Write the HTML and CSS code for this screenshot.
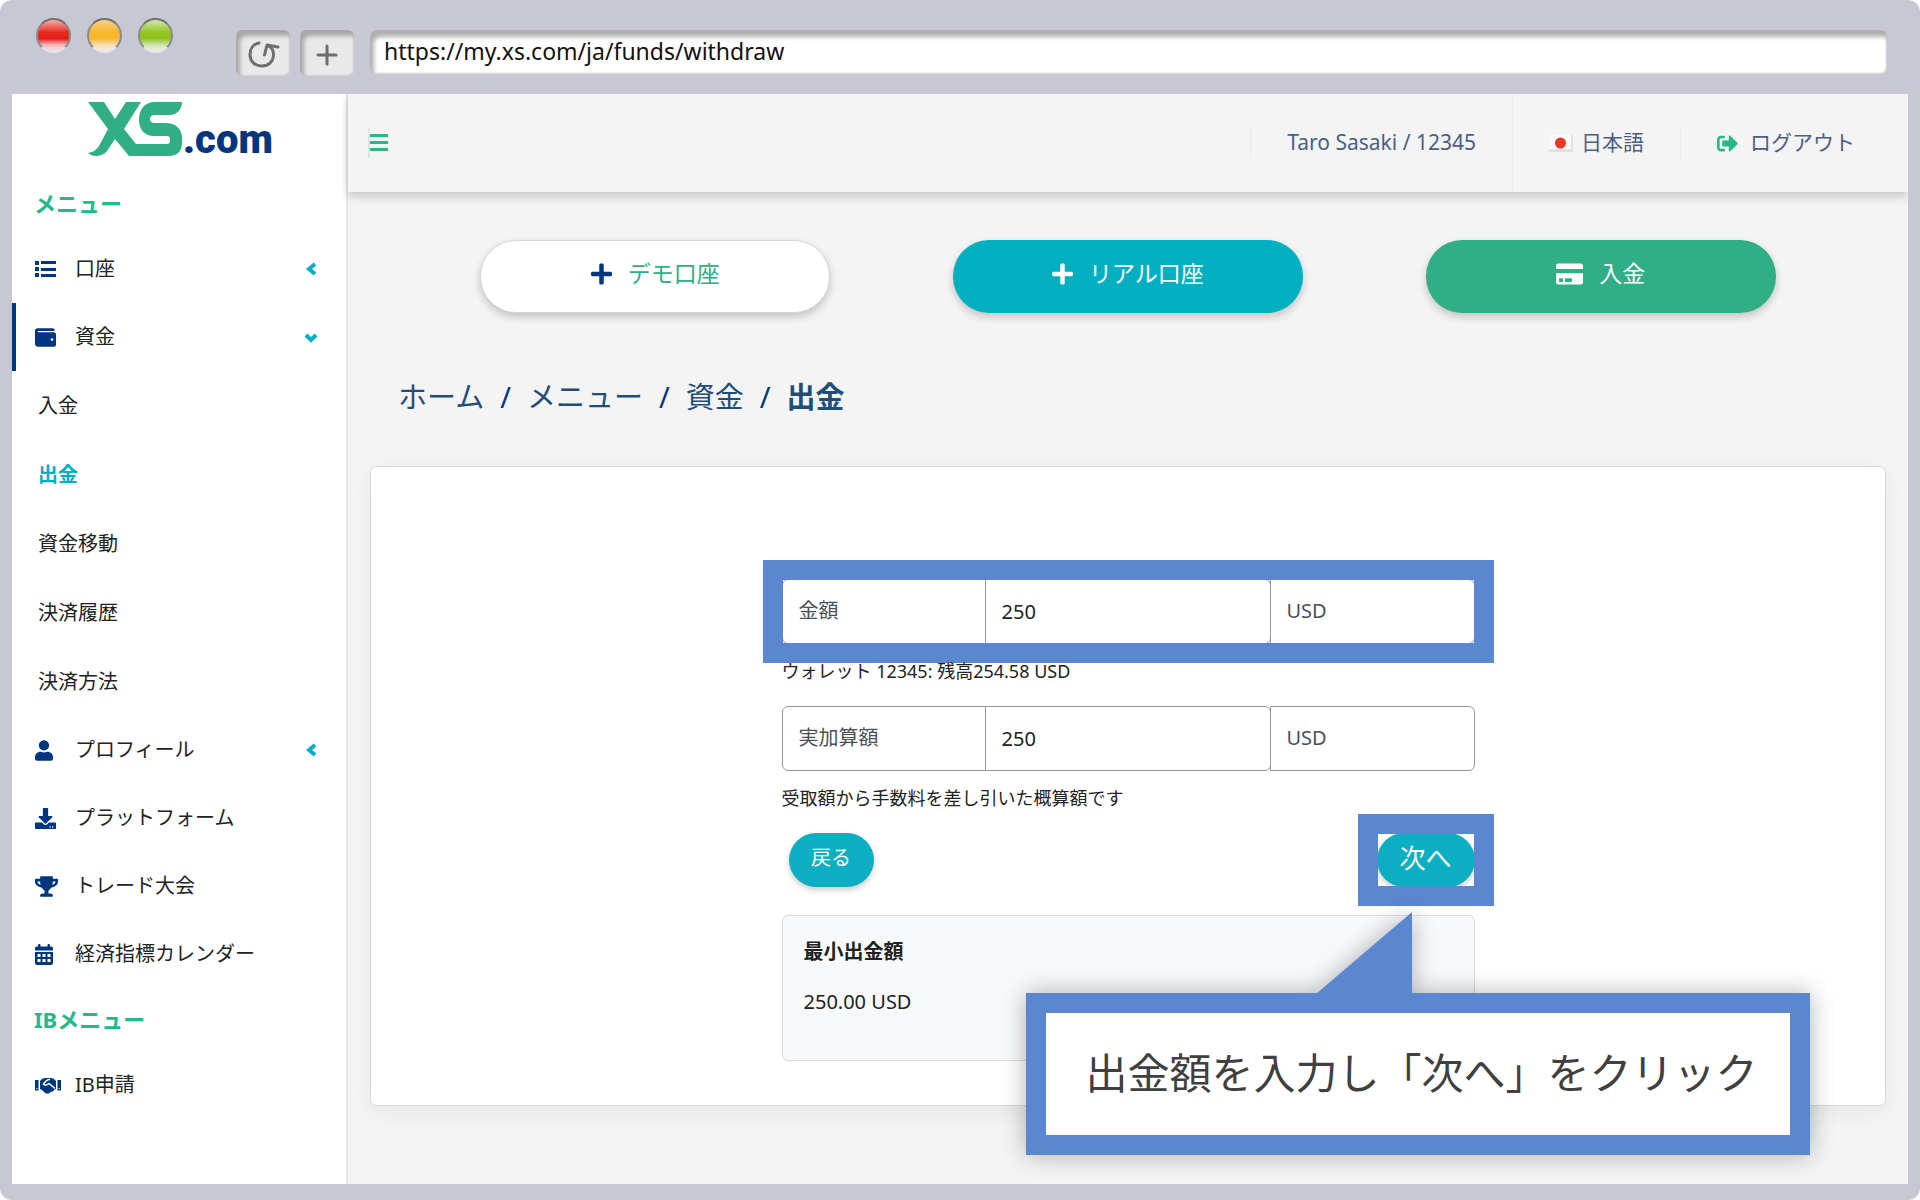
FILE: index.html
```html
<!DOCTYPE html>
<html lang="ja">
<head>
<meta charset="utf-8">
<title>出金 | XS.com</title>
<link rel="stylesheet" href="styles.css">
</head>
<body>
<div class="browser">
  <div class="chrome">
    <div class="lights">
      <span class="light light-red"></span>
      <span class="light light-amber"></span>
      <span class="light light-green"></span>
    </div>
    <button class="chrome-btn" type="button" aria-label="再読み込み">
      <svg width="34" height="32" viewBox="0 0 34 32" fill="none" stroke="#6e6e6e" stroke-width="3" stroke-linecap="round" stroke-linejoin="round"><path d="M13 4C7 5 4 10 4 15.500c0 7 5 11.500 11.500 11.500s12-4 12-11.500c0-4-2-7-5-8.500"/><path d="M32 8l-11-2-2.500 10"/></svg>
    </button>
    <button class="chrome-btn" type="button" aria-label="新しいタブ">
      <svg width="22" height="22" viewBox="0 0 22 22" stroke="#6e6e6e" stroke-width="3" stroke-linecap="round"><path d="M11 2v18M2 11h18"/></svg>
    </button>
    <input class="url" type="text" aria-label="URL" value="https://my.xs.com/ja/funds/withdraw">
  </div>

  <div class="app">
    <aside class="sidebar">
      <a class="logo" href="#" aria-label="XS.com">
        <svg class="logo-mark" width="95" height="54" viewBox="0 0 95 54" fill="#30ae85"><path d="M0 0H16L27 17 38 0H53L36 27 48 42H79Q82 42 82 39V37Q82 34 79 34H66C56 34 51 27 51 18C51 8 56 0 67 0H94C94 8 88 13 82 13H67Q62 13 62 17Q62 21 67 21H77C88 21 94 27 94 36V40C94 49 90 54 80 54H41L27 37 21 46C18 52 13 54 8 54Q3 54 0 51C6 50 9 47 11 44L20 27Z"/></svg><span class="logo-text">.com</span>
      </a>
      <nav>
        <h2 class="menu-title">メニュー</h2>
        <ul class="menu">
          <li><a class="item" href="#"><svg class="icon" width="21" height="20" viewBox="0 0 21 20" fill="#003580"><path d="M0 2h4v4H0zM6 2h15v3H6zM0 8h4v4H0zM6 9h15v3H6zM0 14h4v4H0zM6 15h15v3H6z"/></svg>口座<svg class="chev" width="12" height="14" viewBox="0 0 12 14"><path d="M9 2L3 7l6 5"/></svg></a></li>
          <li>
            <a class="item item-open" href="#"><svg class="icon" width="21" height="21" viewBox="0 0 512 512" fill="#003580"><path d="M461.200 128H80c-8.800 0-16-7.200-16-16s7.200-16 16-16h384c8.800 0 16-7.200 16-16 0-26.500-21.500-48-48-48H64C28.600 32 0 60.600 0 96v320c0 35.400 28.600 64 64 64h397.200c28 0 50.800-21.500 50.800-48V176c0-26.500-22.800-48-50.800-48zM416 336c-17.700 0-32-14.300-32-32s14.300-32 32-32 32 14.300 32 32-14.300 32-32 32z"/></svg>資金<svg class="chev" width="14" height="12" viewBox="0 0 14 12"><path d="M2 4l5 5 5-5"/></svg></a>
            <ul class="menu submenu">
              <li><a class="sub" href="#">入金</a></li>
              <li><a class="sub sub-active" href="#">出金</a></li>
              <li><a class="sub" href="#">資金移動</a></li>
              <li><a class="sub" href="#">決済履歴</a></li>
              <li><a class="sub" href="#">決済方法</a></li>
            </ul>
          </li>
          <li><a class="item" href="#"><svg class="icon" width="18" height="21" viewBox="0 0 448 512" fill="#003580"><path d="M224 256c70.700 0 128-57.300 128-128S294.700 0 224 0 96 57.300 96 128s57.300 128 128 128zm89.600 32h-16.700c-22.200 10.200-46.900 16-72.900 16s-50.600-5.800-72.900-16h-16.700C60.200 288 0 348.200 0 422.400V464c0 26.500 21.500 48 48 48h352c26.500 0 48-21.500 48-48v-41.600c0-74.200-60.200-134.400-134.400-134.400z"/></svg>プロフィール<svg class="chev" width="12" height="14" viewBox="0 0 12 14"><path d="M9 2L3 7l6 5"/></svg></a></li>
          <li><a class="item" href="#"><svg class="icon" width="21" height="21" viewBox="0 0 512 512" fill="#003580"><path d="M216 0h80c13.300 0 24 10.700 24 24v168h87.700c17.800 0 26.700 21.500 14.100 34.100L269.700 378.300c-7.500 7.500-19.800 7.500-27.300 0L90.100 226.100c-12.600-12.600-3.700-34.100 14.100-34.100H192V24c0-13.300 10.700-24 24-24zm296 376v112c0 13.300-10.700 24-24 24H24c-13.300 0-24-10.700-24-24V376c0-13.300 10.700-24 24-24h146.700l49 49c20.100 20.100 52.500 20.100 72.600 0l49-49H488c13.300 0 24 10.700 24 24zm-124 88c0-11-9-20-20-20s-20 9-20 20 9 20 20 20 20-9 20-20zm64 0c0-11-9-20-20-20s-20 9-20 20 9 20 20 20 20-9 20-20z"/></svg>プラットフォーム</a></li>
          <li><a class="item" href="#"><svg class="icon" width="23" height="21" viewBox="0 0 576 512" fill="#003580"><path d="M552 64H448V24c0-13.300-10.700-24-24-24H152c-13.300 0-24 10.700-24 24v40H24C10.700 64 0 74.700 0 88v56c0 35.700 22.500 72.400 61.900 100.700 31.500 22.700 69.800 37.100 110 41.700C203.300 338.500 240 360 240 360v72h-48c-35.300 0-64 20.700-64 56v12c0 6.600 5.400 12 12 12h296c6.600 0 12-5.400 12-12v-12c0-35.300-28.700-56-64-56h-48v-72s36.700-21.500 68.100-73.600c40.300-4.600 78.600-19 110-41.700 39.300-28.300 61.900-65 61.900-100.700V88c0-13.300-10.700-24-24-24zM99.300 192.800C74.900 175.200 64 155.600 64 144v-16h64.200c1 32.600 5.800 61.200 12.800 86.200-15.100-5.200-29.200-12.400-41.700-21.400zM512 144c0 16.100-17.700 36.100-35.300 48.800-12.500 9-26.700 16.200-41.800 21.400 7-25 11.800-53.600 12.800-86.200H512v16z"/></svg>トレード大会</a></li>
          <li><a class="item" href="#"><svg class="icon" width="18" height="21" viewBox="0 0 18 21" fill="#003580" fill-rule="evenodd"><path d="M3 1Q3 0 4.200 0T5.500 1V2.500H12.500V1Q12.500 0 13.800 0T15 1V2.500H16Q18 2.500 18 4.500V6.500H0V4.500Q0 2.500 2 2.500H3ZM0 8H18V19Q18 21 16 21H2Q0 21 0 19ZM2.500 10V13H5.500V10ZM7.500 10V13H10.500V10ZM12.500 10V13H15.500V10ZM2.500 15V18H5.500V15ZM7.500 15V18H10.500V15ZM12.500 15V18H15.500V15Z"/></svg>経済指標カレンダー</a></li>
        </ul>
        <h2 class="menu-title">IBメニュー</h2>
        <ul class="menu">
          <li><a class="item" href="#"><svg class="icon" width="26" height="17" viewBox="0 0 26 17"><path fill="#003580" d="M0 3H3.500V13.500H0ZM22.500 3H26V13.500H22.500ZM5 4Q7 1 10 1H16Q19 1 21 4V12Q19 12 18 14.500L15.500 15 14 16.500H11L9 15 7 13 5 12Z"/><path d="M15 2.500Q12 2 8.500 7Q10.500 9.500 14 6.500L20 11.500" fill="none" stroke="#fff" stroke-width="1.500"/><path fill="#fff" d="M1.200 11h1v1h-1zM23.800 11h1v1h-1z"/></svg>IB申請</a></li>
        </ul>
      </nav>
    </aside>

    <div class="content">
      <header class="topbar">
        <button class="burger" type="button" aria-label="メニューを開閉"><svg width="18" height="18" viewBox="0 0 18 18" fill="#26b88b"><path d="M0 0h18v3H0zM0 7h18v3H0zM0 14h18v3H0z"/></svg></button>
        <a class="top-link" href="#">Taro Sasaki / 12345</a>
        <a class="top-link top-lang" href="#"><svg width="24" height="17" viewBox="0 0 24 17"><path fill="#e2e2e4" d="M0 0h24v17H0z"/><path fill="#fafafa" d="M0 0h22v14H0z"/><circle cx="11.500" cy="8" r="5.500" fill="#ee3524"/></svg>日本語</a>
        <a class="top-link top-out" href="#"><svg width="21" height="21" viewBox="0 0 512 512" fill="#26b88b"><path d="M497 273L329 441c-15 15-41 4.500-41-17v-96H152c-13.300 0-24-10.700-24-24v-96c0-13.300 10.700-24 24-24h136V88c0-21.400 25.900-32 41-17l168 168c9.300 9.400 9.300 24.600 0 34zM192 436v-40c0-6.600-5.400-12-12-12H96c-17.700 0-32-14.300-32-32V160c0-17.700 14.300-32 32-32h84c6.600 0 12-5.400 12-12V76c0-6.600-5.400-12-12-12H96c-53 0-96 43-96 96v192c0 53 43 96 96 96h84c6.600 0 12-5.400 12-12z"/></svg>ログアウト</a>
      </header>

      <main class="page">
        <div class="actions">
          <button class="action action-demo" type="button"><svg width="21" height="24" viewBox="0 0 448 512" fill="#003580"><path d="M416 208H272V64c0-17.700-14.300-32-32-32h-32c-17.700 0-32 14.300-32 32v144H32c-17.700 0-32 14.300-32 32v32c0 17.700 14.300 32 32 32h144v144c0 17.700 14.300 32 32 32h32c17.700 0 32-14.300 32-32V304h144c17.700 0 32-14.300 32-32v-32c0-17.700-14.300-32-32-32z"/></svg>デモ口座</button>
          <button class="action action-real" type="button"><svg width="21" height="24" viewBox="0 0 448 512" fill="#fff"><path d="M416 208H272V64c0-17.700-14.300-32-32-32h-32c-17.700 0-32 14.300-32 32v144H32c-17.700 0-32 14.300-32 32v32c0 17.700 14.300 32 32 32h144v144c0 17.700 14.300 32 32 32h32c17.700 0 32-14.300 32-32V304h144c17.700 0 32-14.300 32-32v-32c0-17.700-14.300-32-32-32z"/></svg>リアル口座</button>
          <button class="action action-deposit" type="button"><svg width="27" height="24" viewBox="0 0 576 512" fill="#fff"><path d="M0 432c0 26.500 21.500 48 48 48h480c26.500 0 48-21.500 48-48V240H0v192zm192-76c0-6.600 5.400-12 12-12h124c6.600 0 12 5.400 12 12v56c0 6.600-5.400 12-12 12H204c-6.600 0-12-5.400-12-12v-56zm-128 0c0-6.600 5.400-12 12-12h64c6.600 0 12 5.400 12 12v56c0 6.600-5.400 12-12 12H76c-6.600 0-12-5.400-12-12v-56zM576 80v68H0V80c0-26.500 21.500-48 48-48h480c26.500 0 48 21.500 48 48z"/></svg>入金</button>
        </div>

        <nav class="crumbs" aria-label="パンくずリスト">
          <a href="#">ホーム</a><span>/</span><a href="#">メニュー</a><span>/</span><a href="#">資金</a><span>/</span><strong>出金</strong>
        </nav>

        <section class="card">
          <form class="form">
            <div class="group highlight">
              <label class="cell" for="amount">金額</label>
              <input class="cell cell-input" id="amount" type="text" value="250">
              <span class="cell cell-unit">USD</span>
            </div>
            <p class="help">ウォレット 12345: 残高254.58 USD</p>
            <div class="group">
              <label class="cell" for="net">実加算額</label>
              <input class="cell cell-input" id="net" type="text" value="250">
              <span class="cell cell-unit">USD</span>
            </div>
            <p class="help">受取額から手数料を差し引いた概算額です</p>
            <div class="buttons">
              <button class="pill" type="button">戻る</button>
              <span class="highlight next-wrap"><button class="pill pill-next" type="submit">次へ</button></span>
            </div>
            <div class="info">
              <h3>最小出金額</h3>
              <p>250.00 USD</p>
            </div>
            <div class="callout">
              <svg class="callout-tip" width="96" height="82" viewBox="0 0 96 82" fill="#5b86d0"><path d="M96 0V82H0Z"/></svg>
              <p>出金額を入力し「次へ」をクリック</p>
            </div>
          </form>
        </section>
      </main>
    </div>
  </div>
</div>
</body>
</html>
```
FILE: styles.css
```css
* { box-sizing: border-box; }

body {
  margin: 0;
  background: #fff;
  color: #222;
  font: 400 20px/1.5 "Noto Sans", "Noto Sans CJK JP", sans-serif;
}

button, input { font: inherit; color: inherit; }
a { color: inherit; text-decoration: none; }
h2, h3, p { margin: 0; }
svg { flex: none; }

.browser {
  display: flex;
  flex-direction: column;
  min-height: 100vh;
  padding: 0 12px 16px;
  border-radius: 12px;
  background: #c8c8d4;
}

/* Browser chrome */
.chrome {
  display: flex;
  align-items: flex-start;
  gap: 10px;
  height: 94px;
  padding: 30px 21px 0 24px;
}

.lights {
  display: flex;
  gap: 16px;
  margin: -12px 53px 0 0;
}

.light {
  width: 35px;
  height: 35px;
  border-radius: 50%;
  border: 2px solid #777;
  border-color: #707070 #8a8a8a #e4e4ea #8a8a8a;
}

.light-red { background: linear-gradient(#f7b0a4, #ea2a20 40%, #e81c1c 60%, #f0b8b8 80%, #efe4e4); }
.light-amber { background: linear-gradient(#f7cf86, #f8b62d 40%, #f8b62d 60%, #f6ddb4 80%, #f3ede2); }
.light-green { background: linear-gradient(#d3e8ae, #93c620 40%, #8fc31f 60%, #cfe2b0 80%, #edf2e6); }

.chrome-btn {
  display: grid;
  place-items: center;
  width: 54px;
  height: 46px;
  padding: 4px 0 0;
  border: 0;
  border-radius: 6px;
  background: #e9e9e9;
  box-shadow: inset 4px 6px 4px #a6a6a6, inset -1px -1px 2px #ccc;
}

.url {
  flex: 1;
  min-width: 0;
  height: 44px;
  margin-left: 6px;
  padding: 0 15px 2px 14px;
  border: 0;
  border-radius: 6px;
  background: #fff;
  box-shadow: inset 4px 7px 4px #b0b0b0, inset -1px -1px 2px #ccc;
  color: #111;
  font-size: 23px;
}

.app {
  display: flex;
  flex: 1;
  background: #f4f4f4;
}

/* Sidebar */
.sidebar {
  flex: none;
  width: 336px;
  border-right: 2px solid #e8e8ea;
  background: #fff;
}

.logo {
  display: flex;
  align-items: flex-end;
  height: 78px;
  padding: 0 0 16px 76px;
}

.logo-text {
  color: #003580;
  font: 900 40px/32px Roboto, "Open Sans", sans-serif;
}

.menu-title {
  padding-left: 22px;
  color: #26b88b;
  font-size: 22px;
  font-weight: 700;
  line-height: 63px;
}

.menu {
  margin: 0;
  padding: 0;
  list-style: none;
}

.item {
  display: flex;
  align-items: center;
  height: 68px;
  padding: 0 28px 0 23px;
}

.item-open {
  padding-left: 19px;
  border-left: 4px solid #003580;
}

.icon {
  overflow: visible;
}

.icon[width="18"] { margin-right: 22px; }
.icon[width="21"] { margin-right: 19px; }
.icon[width="23"] { margin-right: 17px; }
.icon[width="26"] { margin-right: 14px; }

.chev {
  margin-left: auto;
  fill: none;
  stroke: #00afc0;
  stroke-width: 4;
}

.sub {
  display: block;
  padding-left: 26px;
  line-height: 69px;
}

.sub-active {
  color: #00afc0;
  font-weight: 700;
}

/* Top bar */
.content {
  flex: 1;
  min-width: 0;
}

.topbar {
  display: flex;
  align-items: center;
  height: 98px;
  padding: 0 17px 0 20px;
  color: #4a5f86;
  font-size: 21px;
  box-shadow: 0 4px 10px rgba(0, 0, 0, .2);
  clip-path: inset(0 0 -20px -6px);
}

.burger {
  display: flex;
  margin-right: auto;
  padding: 6px 0;
  border: 0;
  border-left: 2px solid #e2e2e2;
  background: none;
}

.top-link {
  display: flex;
  align-items: center;
  gap: 8px;
  padding: 0 36px;
  border-left: 1px solid #ebebeb;
}

.top-lang {
  height: 98px;
}

.top-out {
  gap: 12px;
}

/* Page */
.page {
  padding: 48px 22px;
}

.actions {
  display: grid;
  grid-template-columns: repeat(3, 1fr);
  justify-items: center;
  padding: 0 49px;
}

.action {
  display: flex;
  align-items: center;
  justify-content: center;
  gap: 16px;
  width: 74%;
  height: 73px;
  padding: 0 0 6px;
  border: 0;
  border-radius: 36px;
  color: #fff;
  font-size: 23px;
  box-shadow: 0 4px 8px rgba(0, 0, 0, .2);
}

.action-demo {
  border: 1px solid #d2d6e0;
  background: #fff;
  color: #30ae85;
}

.action-real { background: #00afc0; }
.action-deposit { background: #30ae85; }

.crumbs {
  display: flex;
  gap: 16px;
  margin: 61px 28px 46px;
  color: #1f4e79;
  font-size: 29px;
  line-height: 46px;
}

.crumbs span { color: #003580; }
.crumbs strong { font-weight: 700; }

.card {
  min-height: 640px;
  padding: 112px 20px 44px;
  border: 1px solid #d6d9e0;
  border-radius: 6px;
  background: #fff;
  box-shadow: 0 6px 24px rgba(0, 0, 0, .06);
}

.form {
  position: relative;
  max-width: 693px;
  margin: 0 auto;
}

.group {
  display: grid;
  grid-template-columns: 204px 1fr 204px;
  height: 65px;
}

.cell {
  display: flex;
  align-items: center;
  min-width: 0;
  padding: 0 16px 2px;
  border: 1px solid #999;
  border-radius: 6px 0 0 6px;
  background: #fff;
  color: #495057;
}

.cell-input {
  padding-bottom: 0;
  margin-left: -1px;
  border-radius: 0 6px 6px 0;
  color: #222;
}

.cell-unit {
  margin-left: -1px;
  border-radius: 0 6px 6px 0;
}

.highlight {
  position: relative;
}

.highlight::after {
  content: "";
  position: absolute;
  inset: -19px;
  border: 20px solid #5b86d0;
}

.help {
  position: relative;
  z-index: 1;
  margin: 14px 0 21px;
  font-size: 18px;
  line-height: 27px;
}

.buttons {
  display: flex;
  justify-content: space-between;
  padding: 0 0 28px 7px;
}

.next-wrap { display: flex; }

.pill {
  width: 85px;
  height: 54px;
  padding: 0 0 4px;
  border: 0;
  border-radius: 27px;
  background: #0bafc1;
  color: #fff;
  font-size: 20px;
  box-shadow: 0 3px 6px rgba(0, 0, 0, .2);
}

.pill-next {
  width: 98px;
  font-size: 26px;
}

.info {
  display: grid;
  align-content: start;
  gap: 20px;
  height: 146px;
  padding: 21px;
  border: 1px solid #d9dbde;
  border-radius: 6px;
  background: #f8f9fb;
}

.info h3 {
  font-size: 20px;
}

.callout {
  position: absolute;
  top: 414px;
  left: 244px;
  padding: 28px 32px 30px 40px;
  border: 20px solid #5b86d0;
  background: #fff;
  color: #404040;
  font-size: 42px;
  line-height: 64px;
  white-space: nowrap;
  filter: drop-shadow(0 0 12px rgba(0, 0, 0, .3));
}

.callout-tip {
  position: absolute;
  left: 270px;
  bottom: 100%;
  margin-bottom: 19px;
}
```
